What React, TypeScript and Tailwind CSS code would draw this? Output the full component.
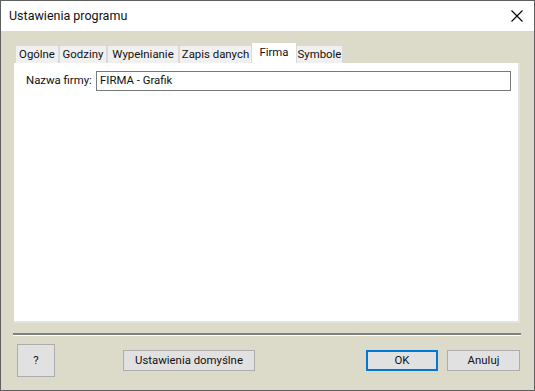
import React from "react";

const tabs = [
  { label: "Ogólne", w: "w-[44px]" },
  { label: "Godziny", w: "w-[48px]" },
  { label: "Wypełnianie", w: "w-[72px]" },
  { label: "Zapis danych", w: "w-[73px]" },
  { label: "Firma", w: "w-[44px]", active: true },
  { label: "Symbole", w: "w-[47px]" },
];

export default function App() {
  return (
    <div
      className="w-[535px] h-[391px] border border-[#5f5f5f] bg-[#dcdac8] flex flex-col text-[11.4px] text-[#111] whitespace-nowrap"
      style={{ fontFamily: 'Roboto, "Liberation Sans", sans-serif' }}
    >
      {/* title bar */}
      <div className="h-[30px] bg-white flex items-center justify-between pl-[8px] pr-[11px] shrink-0">
        <span className="leading-none text-[12.5px]">Ustawienia programu</span>
        <svg width="12" height="12" viewBox="0 0 12 12" className="text-black">
          <path d="M0.5 0.5 L11.5 11.5 M11.5 0.5 L0.5 11.5" stroke="currentColor" strokeWidth="1.1" />
        </svg>
      </div>

      <div className="flex-1 flex flex-col pl-[13px]">
        {/* tabs */}
        <div className="mt-[12px] h-[20px] flex items-end pl-[1px]">
          {tabs.map((t) =>
            t.active ? (
              <div
                key={t.label}
                className={`${t.w} h-[20px] bg-white flex justify-center pt-[2px] leading-[14px]`}
              >
                {t.label}
              </div>
            ) : (
              <div
                key={t.label}
                className={`${t.w} h-[18px] bg-[#f0f0f0] border-t border-l border-r border-[#d9d9d9] flex items-center justify-center leading-none`}
              >
                {t.label}
              </div>
            )
          )}
        </div>

        {/* panel */}
        <div className="w-[506px] h-[260px] bg-white border-r-2 border-b-2 border-[#e3e3e3] pt-[8px] pl-[12px] flex items-start">
          <div className="h-[20px] flex items-center w-[70px] shrink-0">Nazwa firmy:</div>
          <div className="w-[415px] h-[20px] shrink-0 border border-[#7a7a7a] flex items-center pl-[3px]">
            FIRMA - Grafik
          </div>
        </div>

        {/* separator */}
        <div className="mt-[10px] w-[508px] -ml-px">
          <div className="h-[2px] bg-[#808080]" />
          <div className="h-px bg-white" />
        </div>

        {/* buttons */}
        <div className="mt-[8px] flex items-center pl-[3px]">
          <button className="w-[38px] h-[33px] bg-[#e1e1e1] border border-[#adadad] flex items-center justify-center">
            ?
          </button>
          <button className="ml-[68px] w-[132px] h-[21px] bg-[#e1e1e1] border border-[#adadad] flex items-center justify-center">
            Ustawienia domyślne
          </button>
          <button className="ml-[111px] w-[72px] h-[21px] bg-[#e1e1e1] border-2 border-[#0078d7] flex items-center justify-center">
            OK
          </button>
          <button className="ml-[9px] w-[73px] h-[21px] bg-[#e1e1e1] border border-[#adadad] flex items-center justify-center">
            Anuluj
          </button>
        </div>
      </div>
    </div>
  );
}
